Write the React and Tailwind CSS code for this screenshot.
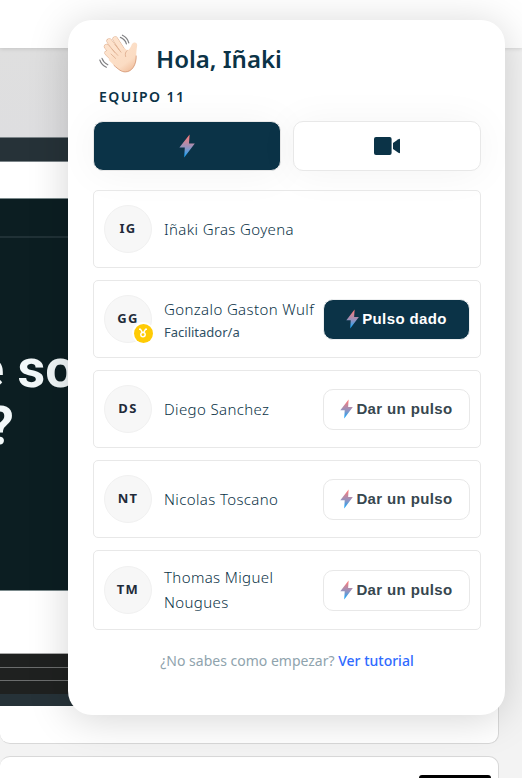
import React from 'react';

function Bolt({ className, id }) {
  return (
    <svg viewBox="0 0 16 24" className={className} aria-hidden="true">
      <defs>
        <linearGradient id={id} x1="0" y1="0" x2="0" y2="1">
          <stop offset="0.05" stopColor="#ff7a78" />
          <stop offset="0.6" stopColor="#8a94c4" />
          <stop offset="0.95" stopColor="#16a4f8" />
        </linearGradient>
      </defs>
      <path d="M10.6 0.4 0.4 13.6h5.4L5.2 23.6 15.8 9.4H10z" fill={`url(#${id})`} />
    </svg>
  );
}

function Camera() {
  return (
    <svg viewBox="0 0 26 18" className="h-[18px] w-[26px]" fill="#0b3347" aria-hidden="true">
      <rect x="0" y="0" width="17.6" height="18" rx="2" />
      <path d="M19 6 24.4 2.2Q26 1.3 26 2.6V15.4Q26 16.7 24.4 15.8L19 12z" />
    </svg>
  );
}

function Wave() {
  return (
    <svg viewBox="0 0 40 40" className="size-10" aria-hidden="true">
      <defs>
        <linearGradient id="skin" x1="0.1" y1="0" x2="0.8" y2="1">
          <stop offset="0" stopColor="#fde2cc" />
          <stop offset="0.7" stopColor="#fbdcc3" />
          <stop offset="1" stopColor="#f0bd9b" />
        </linearGradient>
      </defs>
      <g strokeLinecap="round" fill="none" stroke="#dcab8b">
        <path d="M24 17 16.2 5" strokeWidth="5.4" />
        <path d="M20 20 10.2 7" strokeWidth="5.4" />
        <path d="M17 24 7.6 12.6" strokeWidth="5.4" />
        <path d="M17 28 8 19" strokeWidth="5.2" />
      </g>
      <g strokeLinecap="round" fill="none" stroke="#fde2cc">
        <path d="M24 17 16.2 5" strokeWidth="4.6" />
        <path d="M20 20 10.2 7" strokeWidth="4.6" />
        <path d="M17 24 7.6 12.6" strokeWidth="4.6" />
        <path d="M17 28 8 19" strokeWidth="4.4" />
      </g>
      <path
        d="M10.4 24.4 17 18 25.6 14.2 28.4 16.4C30.8 15.8 31.6 13 33 10 34.4 7.4 38.6 8 38.2 11.4 37.6 15 37.2 18.6 37.2 23 37.2 31.8 32.4 38 26.4 38 21.4 38 18.4 34.6 9.6 26z"
        fill="url(#skin)"
      />
      <g stroke="#dcab8b" strokeWidth="0.8" fill="none" strokeLinecap="round">
        <path d="M16 10.4 22 18.2M12.8 14.8 18.8 21.4M12 20 16.6 24.4" />
        <path d="M28.4 16.4C26.4 17.6 25.8 20 26.6 22.6" />
        <path d="M37.2 22C37.4 31 33 37.8 26.4 37.9 22.4 37.9 19.8 35.6 15 31.4" stroke="#d39471" />
      </g>
      <g stroke="#808083" strokeWidth="1.2" fill="none" strokeLinecap="round">
        <path d="M21.4 3.4C24.4 4.6 26.6 7 27.4 9.8" />
        <path d="M23.4 1.2C26.6 2.8 29 5.6 29.8 8.8" />
        <path d="M3 24.4C4 27.2 5.8 29.4 8.8 30.8" />
        <path d="M0.8 26C2 29.4 4.2 31.8 7.4 33.2" />
      </g>
    </svg>
  );
}

function Medal() {
  return (
    <span className="absolute -right-[3px] -bottom-[2px] flex size-[22px] items-center justify-center rounded-full bg-white">
      <span className="flex size-[19px] items-center justify-center rounded-full bg-[#ffcb05]">
        <svg viewBox="0 0 10 10" className="size-[10px]" fill="none" stroke="#fff" strokeWidth="1.5" aria-hidden="true">
          <path d="M1 1.2H2.4L4.2 4.2M9 1.2H7.6L5.8 4.2" />
          <circle cx="5" cy="6.6" r="2.2" />
        </svg>
      </span>
    </span>
  );
}

const members = [
  { initials: 'IG', name: 'Iñaki Gras Goyena' },
  { initials: 'GG', name: 'Gonzalo Gaston Wulf', role: 'Facilitador/a', given: true },
  { initials: 'DS', name: 'Diego Sanchez', action: true },
  { initials: 'NT', name: 'Nicolas Toscano', action: true },
  { initials: 'TM', name: 'Thomas Miguel Nougues', action: true },
];

function Member({ initials, name, role, given, action }) {
  return (
    <li className="flex min-h-[78px] items-center rounded-[5px] border border-[#e8e8e8] px-[10px] py-[14px]">
      <span className="relative mr-3 flex size-12 shrink-0 items-center justify-center rounded-full border border-[#f1f1f1] bg-[#f7f7f7] text-[13px] font-bold tracking-widest text-[#1f2b3a]">
        {initials}
        {given && <Medal />}
      </span>
      <span className="min-w-0 flex-1 text-[#0b3347]">
        <span className={given ? 'block whitespace-nowrap text-[15px] leading-[25px] font-light tracking-wide' : 'block text-[15px] leading-[25px] font-light tracking-wide'}>{name}</span>
        {role && <span className="block text-[13px] leading-5 text-[#2f5064]">{role}</span>}
      </span>
      {given && (
        <button className="flex h-[41px] w-[147px] shrink-0 items-center justify-center rounded-[10px] border border-[#eef0f1] bg-[#0b3347] font-['Liberation_Sans',sans-serif] text-[15px] font-bold tracking-wide text-white">
          <Bolt id={`bolt-${initials}`} className="mr-[3px] h-5 w-[13px]" />
          Pulso dado
        </button>
      )}
      {action && (
        <button className="flex h-[41px] w-[147px] shrink-0 items-center justify-center rounded-[10px] border border-[#e8e8e8] bg-white font-['Liberation_Sans',sans-serif] text-[15px] font-bold tracking-wide text-[#37474f]">
          <Bolt id={`bolt-${initials}`} className="mr-[3px] h-5 w-[13px]" />
          Dar un pulso
        </button>
      )}
    </li>
  );
}

function Backdrop() {
  return (
    <div className="h-screen overflow-hidden bg-[#f3f3f3]">
      <header className="relative h-12 bg-white shadow-[0_1px_4px_rgba(0,0,0,0.12)]" />
      <main className="mr-[23px]">
        <section className="rounded-b-[10px] border-r border-b border-[#d8d8d8] bg-white">
          <div className="h-[89px] bg-linear-to-b from-[#dfdfdf] to-[#dedee0]" />
          <div className="h-[25px] border-y border-[#7b8488] bg-[#263238]" />
          <div className="h-9" />
          <div className="h-[393px] overflow-hidden border-y border-[#7b8a8c] bg-[#0c1e22]">
            <div className="h-[39px] border-b-2 border-[#203136]" />
            <p className="mt-[102px] -ml-[25px] font-['Roboto','Noto_Sans',sans-serif] text-[54px] leading-[57px] font-bold whitespace-nowrap text-[#f2f8f9]">
              e so
            </p>
            <p className="-ml-[13px] font-['Roboto','Noto_Sans',sans-serif] text-[54px] leading-[57px] font-bold text-[#f2f8f9]">?</p>
          </div>
          <div className="h-[62px]" />
          <div className="h-[14px] border-t border-[#aaaaaa] bg-[#1f2120]" />
          <div className="h-[14px] border-y border-[#6b6d6d] bg-[#1f2120]" />
          <div className="h-[13px] bg-[#1f2120]" />
          <div className="h-3 bg-[#263238]" />
          <div className="h-[37px]" />
        </section>
        <section className="mt-3 flex h-24 justify-end rounded-t-[10px] border-t border-r border-[#d8d8d8] bg-white pt-[18px] pr-[7px]">
          <div className="h-10 w-[72px] rounded-[3px] bg-black" />
        </section>
      </main>
    </div>
  );
}

export default function App() {
  return (
    <div className="relative overflow-hidden font-['Noto_Sans','Open_Sans',sans-serif]">
      <Backdrop />
      <aside className="absolute top-5 right-[17px] left-[68px] rounded-[24px] bg-white px-[24px] pt-[14px] pb-[42px] shadow-[0_4px_40px_rgba(0,0,0,0.17)]">
        <div className="ml-px">
          <div className="flex h-[50px] items-start pl-[6px]">
            <Wave />
            <h1 className="ml-[17px] pt-[7px] text-[24px] leading-9 font-semibold text-[#0b3347]">Hola, Iñaki</h1>
          </div>
          <h2 className="pl-[6px] text-[14px] leading-[26px] font-semibold tracking-widest text-[#0b3347]">EQUIPO 11</h2>
          <div className="mt-[11px] grid grid-cols-2 gap-3">
            <button aria-label="Pulsos" className="flex h-[50px] items-center justify-center rounded-[10px] border border-[#e8e8e8] bg-[#0b3347] shadow-[0_2px_40px_rgba(0,0,0,0.05)]">
              <Bolt id="bolt-tab" className="h-6 w-4" />
            </button>
            <button aria-label="Videollamada" className="flex h-[50px] items-center justify-center rounded-[10px] border border-[#e8e8e8] bg-white shadow-[0_2px_40px_rgba(0,0,0,0.05)]">
              <Camera />
            </button>
          </div>
          <ul className="mt-[19px] flex flex-col gap-3">
            {members.map((m) => (
              <Member key={m.initials} {...m} />
            ))}
          </ul>
          <p className="mt-[19px] text-center text-[14px] leading-6 text-[#8fa3ad]">
            ¿No sabes como empezar?{' '}
            <a href="#tutorial" className="font-medium text-[#2f6bff]">
              Ver tutorial
            </a>
          </p>
        </div>
      </aside>
    </div>
  );
}
